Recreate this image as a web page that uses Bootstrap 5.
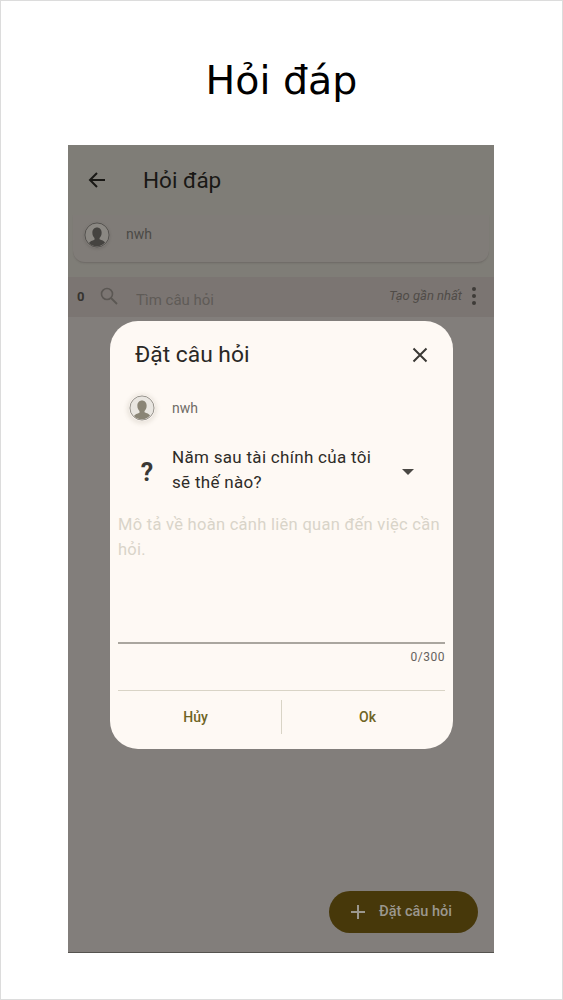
<!DOCTYPE html>
<html lang="vi">
<head>
<meta charset="utf-8">
<title>Hỏi đáp</title>
<link href="https://cdn.jsdelivr.net/npm/bootstrap@5.3.0/dist/css/bootstrap.min.css" rel="stylesheet">
<style>
html,body{margin:0;height:1000px;background:#fff;overflow:hidden}
.shot{height:1000px;border:1px solid #dcdcdc;font-family:Roboto,sans-serif;padding-top:144px;position:relative}
.page-title{position:absolute;top:55px;left:0;right:0;margin:0;text-align:center;font-family:"DejaVu Sans",sans-serif;font-size:39.5px;line-height:48px;font-weight:400;color:#000}
.phone{position:relative;width:426px;height:808px;margin-left:67px;background:#827e7b;border-bottom:1px solid #55534f;overflow:hidden}
.appbar{height:70px;background:#7f7d77;padding-left:17px;color:#191815}
.appbar-title{font-size:22.500px;margin-left:34px;margin-top:2px}
.user-band{height:62px;background:#7f7d77;}
.user-card{height:48px;margin:0 5px;padding-left:11px;padding-bottom:8px;background:#807c78;border-bottom:1px solid #716d69;border-radius:0 0 12px 12px;box-shadow:0 1px 2px rgba(0,0,0,.06)}
.uname{font-size:14px;color:#4b4a46;margin-left:16px}
.avatar{width:26px;height:26px;flex:none;border-radius:50%}
.user-card .avatar{box-shadow:0 1px 3px rgba(0,0,0,.12)}
.dlg-user .avatar{box-shadow:0 1px 4px 2px rgba(90,80,60,.12)}
.search-row{height:40px;background:#7b7572;padding:0 18px 0 9px;color:#5a5652}
.count{font-size:13px;font-weight:700;color:#35332f;width:23px}
.search-ico{margin-top:-3px}
.search-text{font-size:15px;margin-left:18px;margin-top:6px;color:#5f5b57}
.sort-text{font-size:13px;font-style:italic;color:#504c48;margin-right:10px;margin-top:-3px}
.dots{display:flex;flex-direction:column;gap:3px;margin-top:-3px}
.dots i{display:block;width:4px;height:4px;border-radius:50%;background:#3e3b38}
.dialog{position:absolute;left:42px;top:176px;width:343px;height:428px;background:#fef9f4;border-radius:28px;color:#1f1e1a;padding:0 8px}
.dlg-head{height:66px;padding:2px 13px 0 17px}
.dlg-title{font-size:22.800px;line-height:28px;color:#2a2825}
.dlg-user{height:42px;padding-left:11px}
.dlg-user .uname{color:#6f6c66;margin-left:17px}
.q-row{height:68px;margin-top:7px}
.q-mark{width:54px;text-align:center;font-size:25px;font-weight:700;color:#3b3935;padding-left:4px;margin-top:5px}
.q-text{font-size:17px;line-height:25px;letter-spacing:.3px;color:#2e2c28;width:225px;padding-right:15px}
.caret{width:0;height:0;border-left:6px solid transparent;border-right:6px solid transparent;border-top:6px solid #4a4844;margin-left:5px;margin-top:4px}
.hint{font-size:16.500px;line-height:25px;letter-spacing:.28px;color:#d9d4c9;margin-top:8px;height:130px}
.rule{height:2px;background:#aaa69f;margin-top:0}
.counter{font-size:12px;letter-spacing:.5px;color:#65625d;text-align:right;margin-top:5px;line-height:16px}
.rule2{height:1px;background:#d9d4c6;margin-top:25px}
.acts{height:57px}
.act{flex:1 1 0;background:none;border:0;padding:0 0 6px;font-size:14px;font-weight:500;color:#6f6424;line-height:50px}
.act-a{flex:none;width:155px;margin-right:8px}
.act-b{padding-left:8px}
.vline{width:1px;height:34px;background:#d9d4c6;margin-top:-6px}
.fab{position:absolute;left:261px;top:746px;width:149px;height:42px;border-radius:21px;background:#47380a;color:#9b978e;font-size:14.500px;font-weight:500;padding-left:20px;border:0}
.fab span{margin-left:12px;}
</style>
</head>
<body>
<div class="shot">
  <h1 class="page-title">Hỏi đáp</h1>
  <div class="phone">
    <div class="appbar d-flex align-items-center">
      <svg width="24" height="24" viewBox="0 0 24 24"><path d="M20 12H5M12 5l-7 7 7 7" fill="none" stroke="#191815" stroke-width="2"/></svg>
      <div class="appbar-title">Hỏi đáp</div>
    </div>
    <div class="user-band">
      <div class="user-card d-flex align-items-center">
        <svg class="avatar" viewBox="0 0 28 28"><circle cx="14" cy="14" r="13" fill="#8b8883" stroke="#4f4d49"/><path d="M14 6c3 0 5 2.300 5 5.500 0 2.500-1 4.500-2.300 5.700v1.500c2.500 1 4.800 1.800 6 3.300A12 12 0 0 1 5.300 22.500c1.200-1.500 3.500-2.300 6-3.300v-2C10 16 9 14 9 11.500 9 8.300 11 6 14 6z" fill="#454340"/></svg>
        <span class="uname">nwh</span>
      </div>
    </div>
    <div class="search-row d-flex align-items-center">
      <span class="count">0</span>
      <svg class="search-ico" width="18" height="18" viewBox="0 0 18 18"><circle cx="7" cy="7" r="5.500" fill="none" stroke="#5b5753" stroke-width="1.600"/><path d="M11 11l6 6" stroke="#5b5753" stroke-width="1.800"/></svg>
      <span class="search-text">Tìm câu hỏi</span>
      <span class="sort-text ms-auto">Tạo gần nhất</span>
      <span class="dots"><i></i><i></i><i></i></span>
    </div>
    <div class="dialog">
      <div class="dlg-head d-flex align-items-center justify-content-between">
        <span class="dlg-title">Đặt câu hỏi</span>
        <svg width="24" height="24" viewBox="0 0 24 24"><path d="M5.500 5.500l13 13M18.500 5.500l-13 13" stroke="#3a3834" stroke-width="2"/></svg>
      </div>
      <div class="dlg-user d-flex align-items-center">
        <svg class="avatar" viewBox="0 0 28 28"><circle cx="14" cy="14" r="13" fill="#e9e6e1" stroke="#8c8882"/><path d="M14 6c3 0 5 2.300 5 5.500 0 2.500-1 4.500-2.300 5.700v1.500c2.500 1 4.800 1.800 6 3.300A12 12 0 0 1 5.300 22.500c1.200-1.500 3.500-2.300 6-3.300v-2C10 16 9 14 9 11.500 9 8.300 11 6 14 6z" fill="#8a8576"/></svg>
        <span class="uname">nwh</span>
      </div>
      <div class="q-row d-flex align-items-center">
        <span class="q-mark">?</span>
        <span class="q-text">Năm sau tài chính của tôi sẽ thế nào?</span>
        <span class="caret"></span>
      </div>
      <div class="hint">Mô tả về hoàn cảnh liên quan đến việc cần hỏi.</div>
      <div class="rule"></div>
      <div class="counter">0/300</div>
      <div class="rule2"></div>
      <div class="acts d-flex align-items-center">
        <button class="act act-a" type="button">Hủy</button>
        <span class="vline"></span>
        <button class="act act-b" type="button">Ok</button>
      </div>
    </div>
    <button class="fab d-flex align-items-center" type="button">
      <svg width="18" height="18" viewBox="0 0 18 18"><path d="M9 2v14M2 9h14" stroke="#9b978e" stroke-width="2"/></svg>
      <span>Đặt câu hỏi</span>
    </button>
  </div>
</div>
<script src="https://cdn.jsdelivr.net/npm/bootstrap@5.3.0/dist/js/bootstrap.bundle.min.js"></script>
</body>
</html>
